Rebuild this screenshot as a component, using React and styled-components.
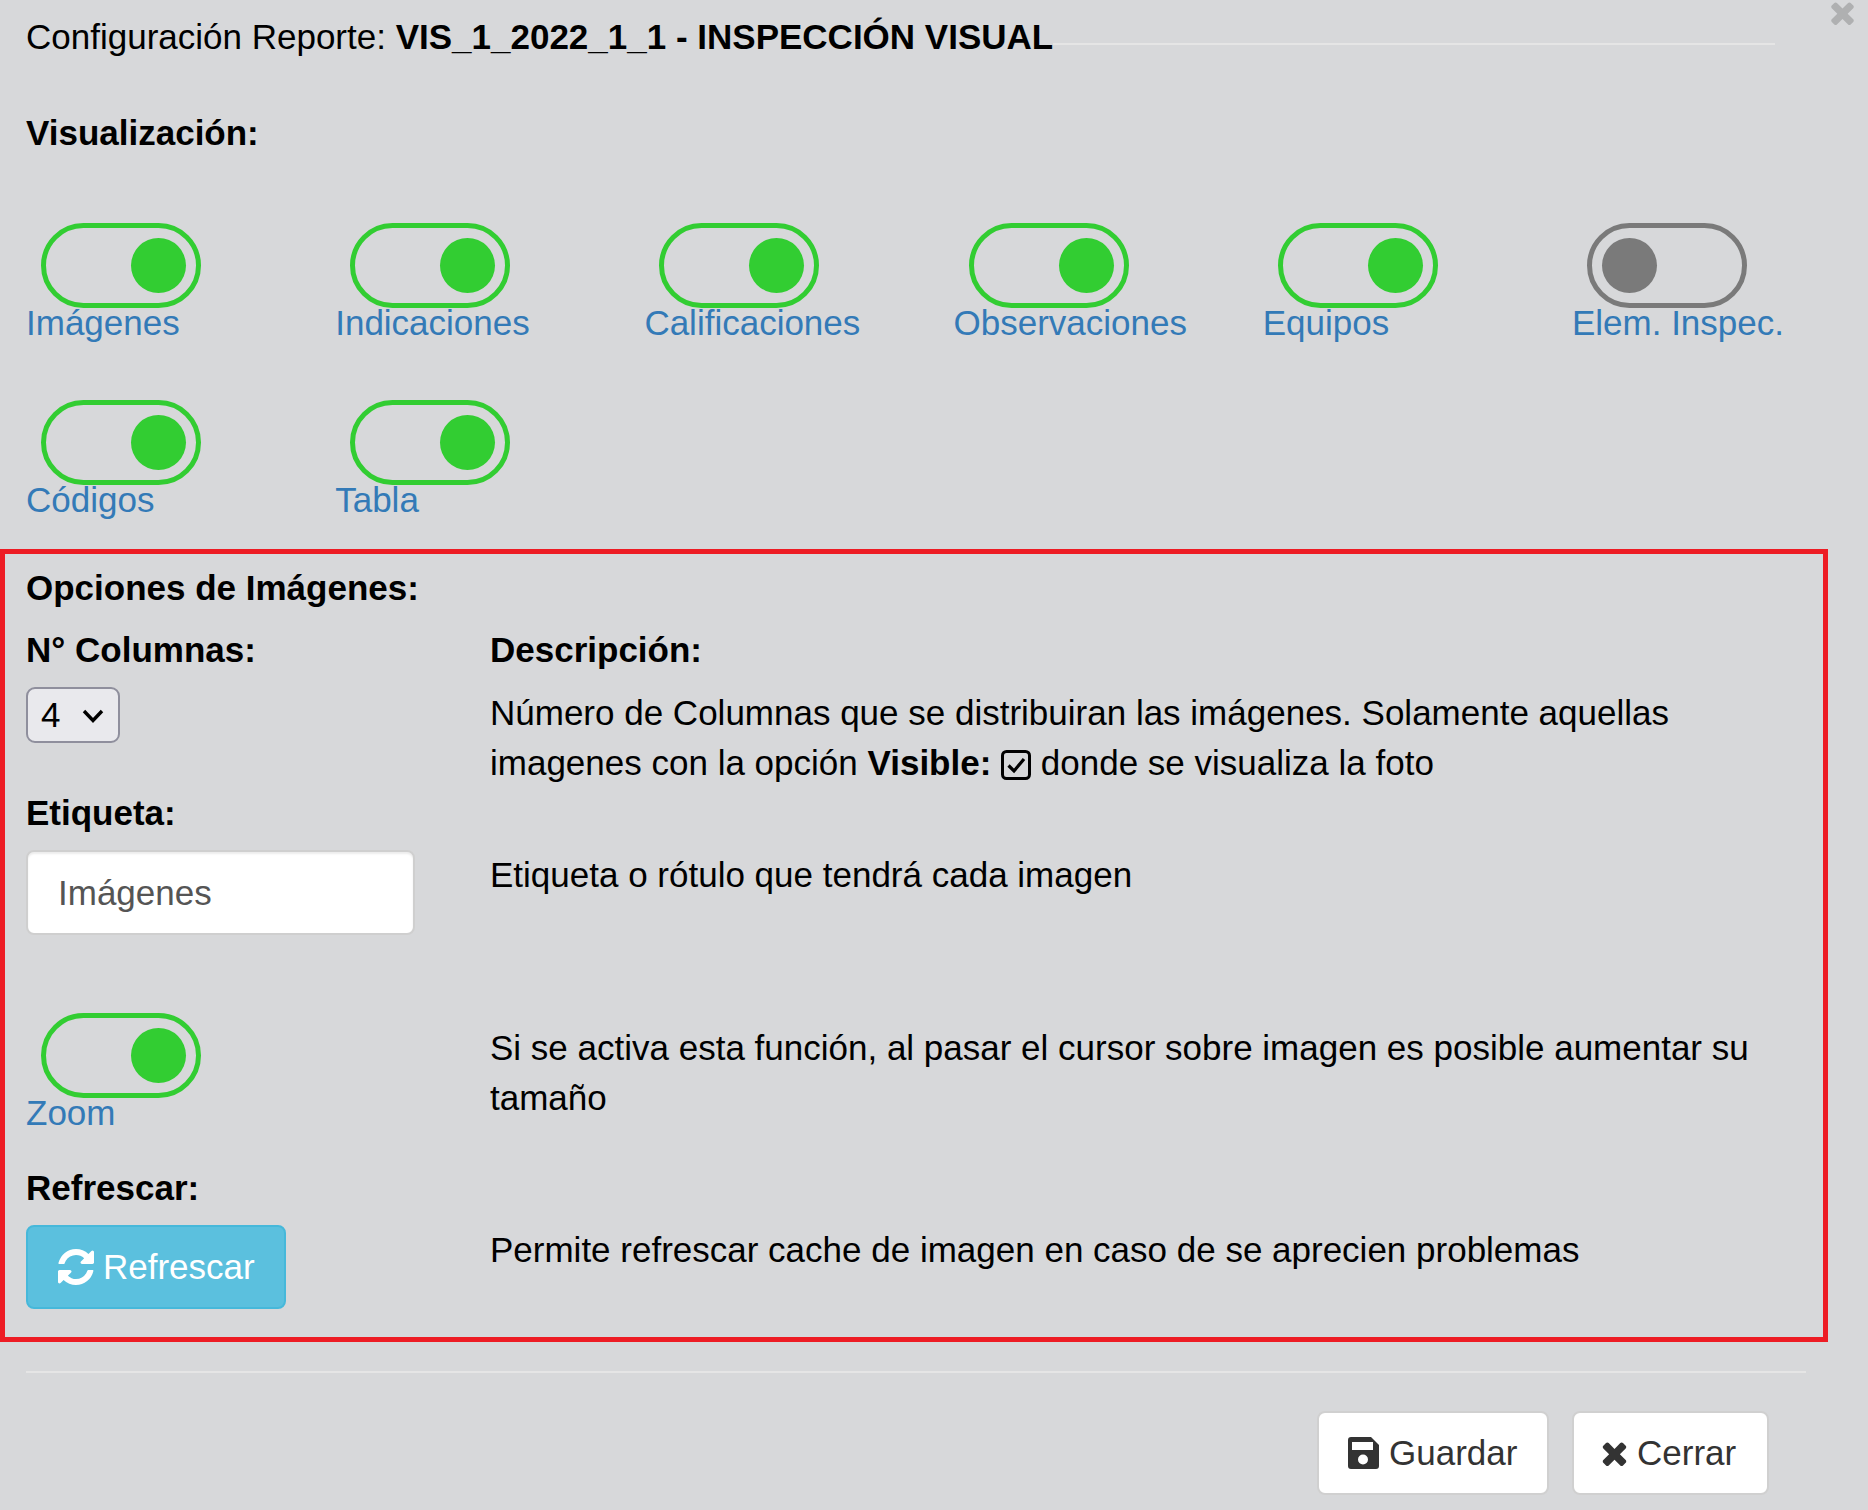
import React from "react"
import styled, { createGlobalStyle } from "styled-components"

const GlobalStyle = createGlobalStyle`
  html, body {
    margin: 0;
    padding: 0;
    background: #d7d8da;
  }
  * {
    box-sizing: border-box;
  }
`

const Page = styled.div`
  position: relative;
  width: 1868px;
  height: 1510px;
  overflow: hidden;
  padding-top: 12px;
  background: #d7d8da;
  color: #000;
  font-family: "Liberation Sans", Arial, sans-serif;
  font-size: 35px;
  line-height: 50px;
`

const CloseIcon = styled.svg`
  position: absolute;
  top: 0;
  left: 1830px;
  width: 25px;
  height: 25px;
  fill: #afb0b1;
`

const TitleRow = styled.div`
  display: flex;
  padding-left: 26px;
  padding-right: 93px;
`

const Title = styled.div`
  white-space: nowrap;
`

const TitleLine = styled.div`
  flex: 1;
  height: 2px;
  margin-top: 31px;
  background: #e5e5e5;
`

const SectionLabel = styled.div`
  font-weight: bold;
  white-space: nowrap;
`

const VisLabel = styled(SectionLabel)`
  margin: 46px 0 0 26px;
`

const ToggleGrid = styled.div`
  display: grid;
  grid-template-columns: repeat(6, 309.2px);
  row-gap: 62px;
  margin: 65px 0 34px 26px;
`

const ToggleCell = styled.div`
  display: flex;
  flex-direction: column;
  align-items: flex-start;
`

const Track = styled.div`
  display: flex;
  align-items: center;
  justify-content: ${(p) => (p.$on ? "flex-end" : "flex-start")};
  width: 160px;
  height: 85px;
  margin-left: 15px;
  padding: 0 10px;
  border: 5px solid ${(p) => (p.$on ? "#32cd32" : "#7a7a7a")};
  border-radius: 43px;
`

const Knob = styled.div`
  width: 55px;
  height: 55px;
  border-radius: 50%;
  background: ${(p) => (p.$on ? "#32cd32" : "#7a7a7a")};
`

const ToggleLabel = styled.div`
  color: #337ab7;
  line-height: 30px;
  white-space: nowrap;
`

const OptionsBox = styled.div`
  width: 1828px;
  height: 793px;
  padding: 9px 0 0 21px;
  border: 5px solid #ed1c24;
`

const OptionRow = styled.div`
  display: grid;
  grid-template-columns: 464px 1fr;
  margin-top: ${(p) => p.$top}px;
`

const Description = styled.div`
  padding-top: ${(p) => p.$top}px;
  padding-right: 50px;
`

const SelectWrap = styled.div`
  position: relative;
  width: 94px;
  height: 56px;
  margin-top: 12px;
`

const Select = styled.select`
  width: 100%;
  height: 100%;
  padding: 0 0 0 13px;
  border: 2px solid #8f8f9d;
  border-radius: 9px;
  background: #e9e9ed;
  color: #000;
  font: inherit;
  appearance: none;
`

const Chevron = styled.svg`
  position: absolute;
  top: 21px;
  left: 56px;
  width: 22px;
  height: 16px;
  pointer-events: none;
`

const TextInput = styled.input`
  display: block;
  width: 389px;
  height: 85px;
  margin-top: 12px;
  padding: 0 30px;
  border: 2px solid #cfcfcf;
  border-radius: 8px;
  background: #fff;
  box-shadow: inset 0 2px 2px rgba(0, 0, 0, 0.08);
  color: #555;
  font: inherit;
`

const Check = styled.svg`
  width: 30px;
  height: 30px;
  vertical-align: -5px;
`

const Button = styled.button`
  display: inline-flex;
  align-items: center;
  gap: ${(p) => p.$gap}px;
  width: ${(p) => p.$w}px;
  height: 84px;
  padding: 0 0 0 ${(p) => p.$pad}px;
  border: 2px solid ${(p) => (p.$info ? "#46b8da" : "#d0d0d0")};
  border-radius: 8px;
  background: ${(p) => (p.$info ? "#5bc0de" : "#fff")};
  color: ${(p) => (p.$info ? "#fff" : "#333")};
  font: inherit;
  white-space: nowrap;
`

const RefreshButton = styled(Button)`
  margin-top: 12px;
`

const FooterLine = styled.div`
  height: 2px;
  margin: 29px 62px 0 26px;
  background: #e5e5e5;
`

const Footer = styled.div`
  display: flex;
  justify-content: flex-end;
  gap: 23px;
  margin-top: 38px;
  padding-right: 99px;
`

const toggles = [
  { label: "Imágenes", on: true },
  { label: "Indicaciones", on: true },
  { label: "Calificaciones", on: true },
  { label: "Observaciones", on: true },
  { label: "Equipos", on: true },
  { label: "Elem. Inspec.", on: false },
  { label: "Códigos", on: true },
  { label: "Tabla", on: true },
]

const TIMES_PATH =
  "M1298 1322q0 40-28 68l-136 136q-28 28-68 28t-68-28l-294-294-294 294q-28 28-68 28t-68-28l-136-136q-28-28-28-68t28-68l294-294-294-294q-28-28-28-68t28-68l136-136q28-28 68-28t68 28l294 294 294-294q28-28 68-28t68 28l136 136q28 28 28 68t-28 68l-294 294 294 294q28 28 28 68z"

const REFRESH_PATH =
  "M1639 1056q0 5-1 7-64 268-268 434.5t-478 166.5q-146 0-282.5-55t-243.5-157l-129 129q-19 19-45 19t-45-19-19-45v-448q0-26 19-45t45-19h448q26 0 45 19t19 45-19 45l-137 137q71 66 161 102t187 36q134 0 250-65t186-179q11-17 53-117 8-23 30-23h192q13 0 22.5 9.5t9.5 22.5zm25-800v448q0 26-19 45t-45 19h-448q-26 0-45-19t-19-45 19-45l138-138q-148-137-349-137-134 0-250 65t-186 179q-11 17-53 117-8 23-30 23h-199q-13 0-22.5-9.5t-9.5-22.5v-7q65-268 270-434.5t480-166.5q146 0 284 55.5t245 156.5l130-129q19-19 45-19t45 19 19 45z"

const TimesIcon = () => (
  <svg width="25" height="26" viewBox="110 238 1188 1316" fill="currentColor">
    <path d={TIMES_PATH} />
  </svg>
)

const RefreshIcon = () => (
  <svg width="36" height="36" viewBox="128 128 1536 1536" fill="currentColor">
    <path d={REFRESH_PATH} />
  </svg>
)

const SaveIcon = () => (
  <svg width="31" height="32" viewBox="0 0 31 32">
    <path
      fill="currentColor"
      fillRule="evenodd"
      d="M3 0h20l8 8v21a3 3 0 0 1-3 3H3a3 3 0 0 1-3-3V3a3 3 0 0 1 3-3zM4 5v8h21V5zM15 17.5a5 5 0 1 0 0 10 5 5 0 0 0 0-10z"
    />
  </svg>
)

const Toggle = ({ label, on }) => (
  <ToggleCell>
    <Track $on={on}>
      <Knob $on={on} />
    </Track>
    <ToggleLabel>{label}</ToggleLabel>
  </ToggleCell>
)

const App = () => (
  <Page>
    <GlobalStyle />
    <CloseIcon viewBox="110 238 1188 1316">
      <path d={TIMES_PATH} />
    </CloseIcon>

    <TitleRow>
      <Title>
        Configuración Reporte: <b>VIS_1_2022_1_1 - INSPECCIÓN VISUAL</b>
      </Title>
      <TitleLine />
    </TitleRow>

    <VisLabel>Visualización:</VisLabel>

    <ToggleGrid>
      {toggles.map((t) => (
        <Toggle key={t.label} label={t.label} on={t.on} />
      ))}
    </ToggleGrid>

    <OptionsBox>
      <SectionLabel>Opciones de Imágenes:</SectionLabel>

      <OptionRow $top={12}>
        <div>
          <SectionLabel>N° Columnas:</SectionLabel>
          <SelectWrap>
            <Select defaultValue="4">
              <option>1</option>
              <option>2</option>
              <option>3</option>
              <option>4</option>
            </Select>
            <Chevron viewBox="0 0 22 16">
              <path d="M2 3l9 9.5L20 3" fill="none" stroke="#000" strokeWidth="3.4" />
            </Chevron>
          </SelectWrap>
        </div>
        <div>
          <SectionLabel>Descripción:</SectionLabel>
          <Description $top={13}>
            Número de Columnas que se distribuiran las imágenes. Solamente aquellas imagenes con la opción{" "}
            <b>Visible:</b>{" "}
            <Check viewBox="0 0 30 30">
              <rect x="1.5" y="1.5" width="27" height="27" rx="4" fill="none" stroke="#000" strokeWidth="3" />
              <path d="M7.5 15.5l5.5 5.5 10-12" fill="none" stroke="#000" strokeWidth="3.2" />
            </Check>{" "}
            donde se visualiza la foto
          </Description>
        </div>
      </OptionRow>

      <OptionRow $top={0}>
        <div>
          <SectionLabel>Etiqueta:</SectionLabel>
          <TextInput defaultValue="Imágenes" />
        </div>
        <Description $top={62}>Etiqueta o rótulo que tendrá cada imagen</Description>
      </OptionRow>

      <OptionRow $top={78}>
        <Toggle label="Zoom" on />
        <Description $top={10}>
          Si se activa esta función, al pasar el cursor sobre imagen es posible aumentar su tamaño
        </Description>
      </OptionRow>

      <OptionRow $top={35}>
        <div>
          <SectionLabel>Refrescar:</SectionLabel>
          <RefreshButton $info $w={260} $pad={30} $gap={9}>
            <RefreshIcon />
            Refrescar
          </RefreshButton>
        </div>
        <Description $top={62}>Permite refrescar cache de imagen en caso de se aprecien problemas</Description>
      </OptionRow>
    </OptionsBox>

    <FooterLine />

    <Footer>
      <Button $w={232} $pad={29} $gap={10}>
        <SaveIcon />
        Guardar
      </Button>
      <Button $w={197} $pad={28} $gap={10}>
        <TimesIcon />
        Cerrar
      </Button>
    </Footer>
  </Page>
)

export default App
